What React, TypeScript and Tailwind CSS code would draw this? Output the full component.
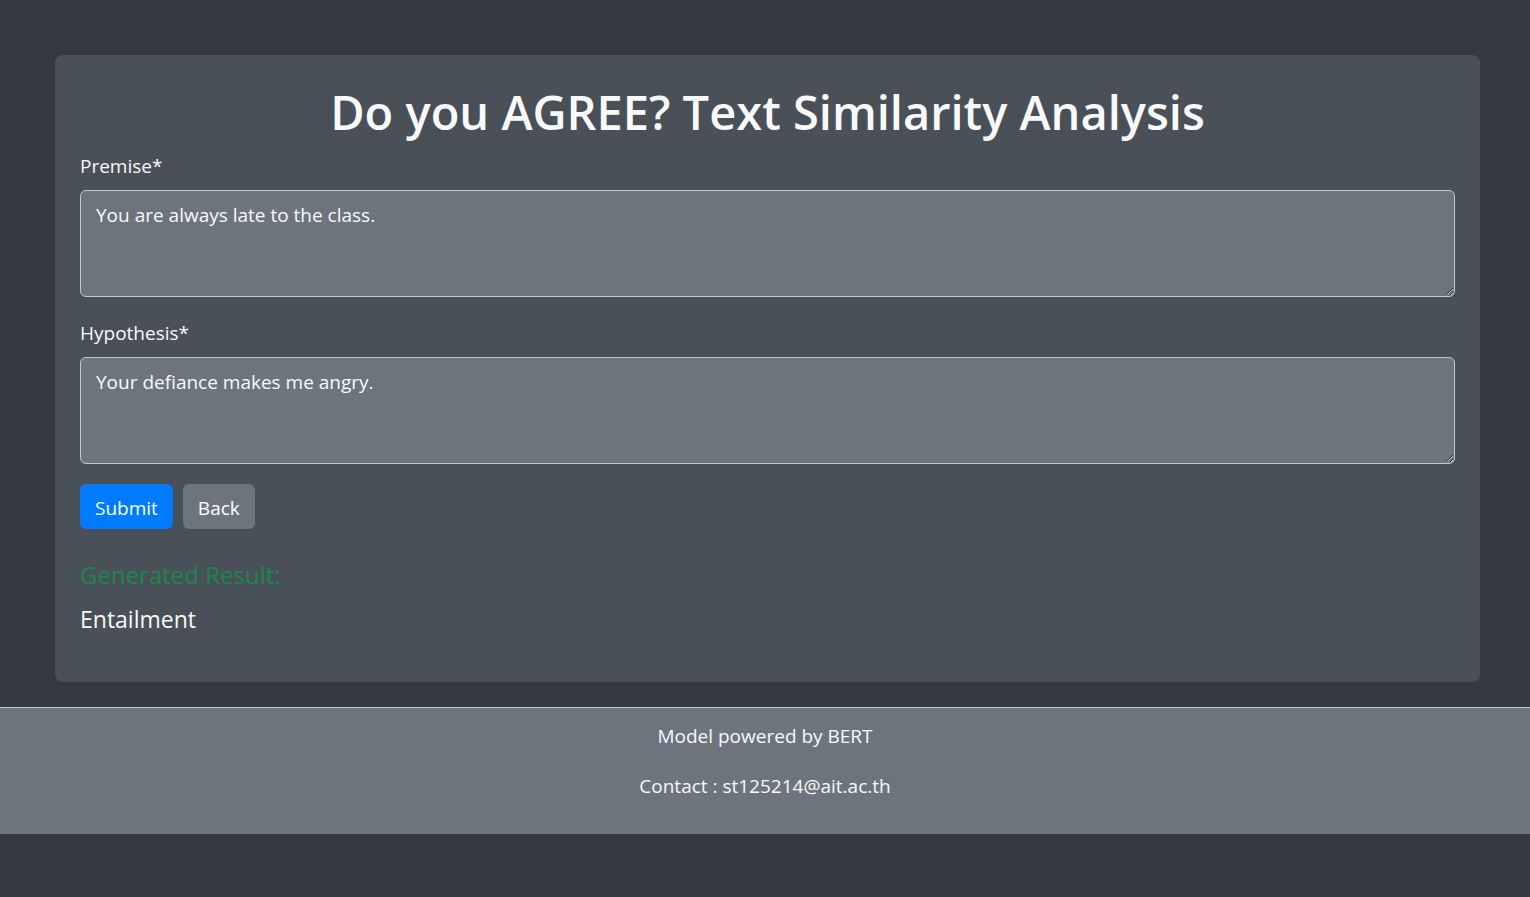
export default function App() {
  return (
    <div className="min-h-screen bg-[#343a40] pt-[55px] text-[#f8f9fa] [font-family:'Open_Sans',sans-serif]">
      <div className="ml-[55px] mr-[50px] rounded-[8px] bg-[#495057] px-[25px] pt-[26px] pb-[48px]">
        <h1 className="text-center text-[47px] font-semibold leading-[62px]">
          Do you AGREE? Text Similarity Analysis
        </h1>
        <form onSubmit={(e) => e.preventDefault()}>
          <label className="mt-[8px] mb-[9px] block text-[19px] leading-[30px]">Premise*</label>
          <textarea
            defaultValue="You are always late to the class."
            className="block h-[107px] w-full rounded-[6px] border border-[#c3c7cb] bg-[#6c757d] px-[15px] py-[9px] text-[19px] leading-[30px] text-[#f8f9fa] outline-none"
          />
          <label className="mt-[21px] mb-[9px] block text-[19px] leading-[30px]">Hypothesis*</label>
          <textarea
            defaultValue="Your defiance makes me angry."
            className="block h-[107px] w-full rounded-[6px] border border-[#c3c7cb] bg-[#6c757d] px-[15px] py-[9px] text-[19px] leading-[30px] text-[#f8f9fa] outline-none"
          />
          <div className="mt-[20px] flex gap-[10px]">
            <button type="submit" className="h-[45px] rounded-[6px] bg-[#007bff] px-[15px] pt-[3px] text-[19px] text-white">
              Submit
            </button>
            <button type="button" className="h-[45px] rounded-[6px] bg-[#6c757d] px-[15px] pt-[3px] text-[19px] text-white">
              Back
            </button>
          </div>
        </form>
        <h5 className="mt-[31px] text-[24px] leading-[30px] text-[#198754]">Generated Result:</h5>
        <p className="mt-[14px] text-[23px] leading-[30px]">Entailment</p>
      </div>
      <footer className="mt-[25px] border-t border-[#c3c7cb] bg-[#6c757d] pt-[13px] pb-[33px] text-center text-[19px] leading-[30px]">
        <p>Model powered by BERT</p>
        <p className="mt-[20px]">Contact : st125214@ait.ac.th</p>
      </footer>
    </div>
  );
}
